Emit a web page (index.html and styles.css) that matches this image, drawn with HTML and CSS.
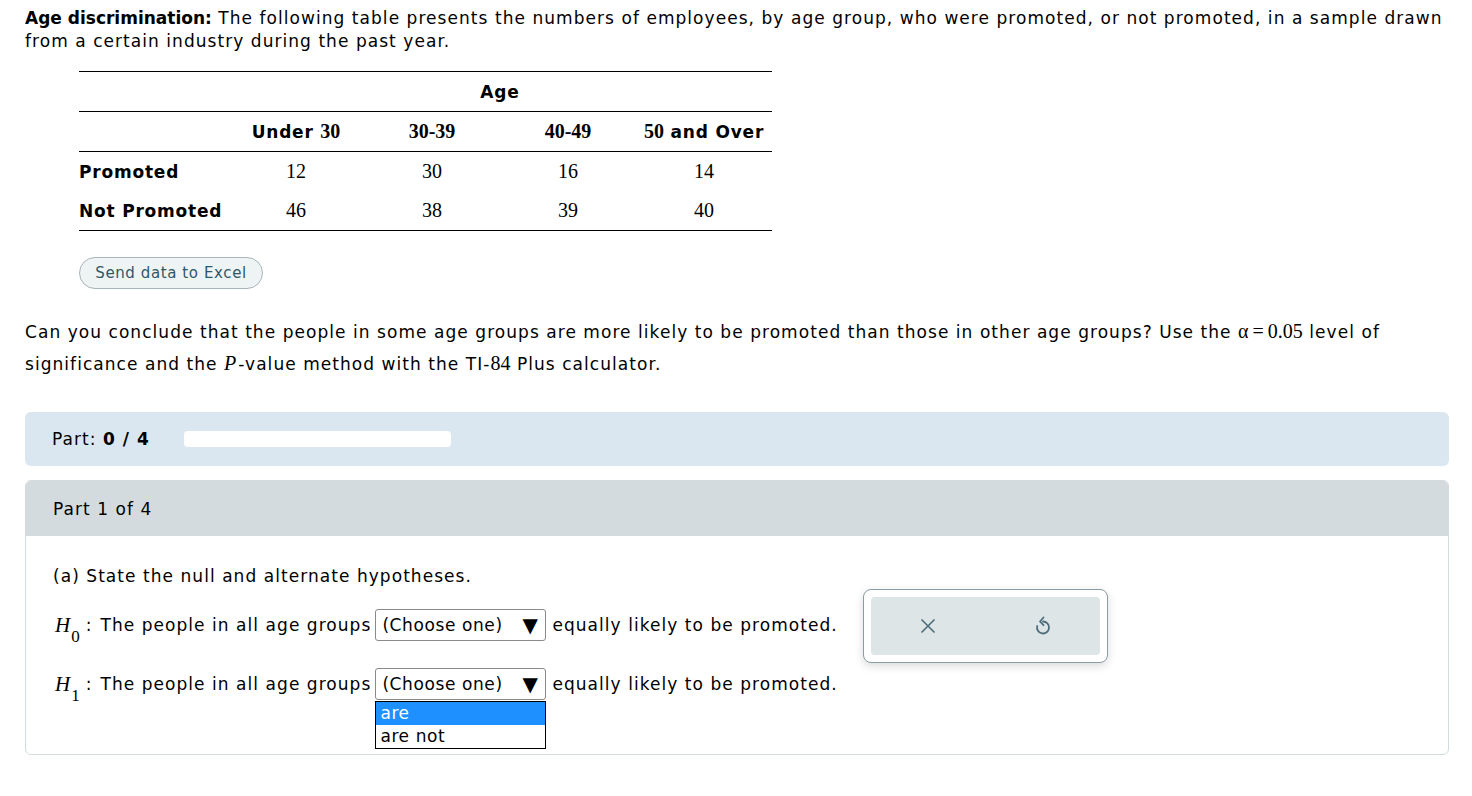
FILE: index.html
```html
<!DOCTYPE html>
<html lang="en">
<head>
    <meta charset="UTF-8">
    <meta name="viewport" content="width=device-width, initial-scale=1.0">
    <title>Age discrimination</title>
    <link rel="stylesheet" href="styles.css">
</head>
<body>
    <div class="page">
        <p class="intro"><b>Age discrimination:</b> The following table presents the numbers of employees, by age group, who were promoted, or not promoted, in a sample drawn from a certain industry during the past year.</p>

        <table class="data-table">
            <tr class="row-age">
                <td></td>
                <th colspan="4">Age</th>
            </tr>
            <tr class="row-head">
                <td></td>
                <th>Under <span class="num">30</span></th>
                <th><span class="num">30-39</span></th>
                <th><span class="num">40-49</span></th>
                <th><span class="num">50</span> and Over</th>
            </tr>
            <tr>
                <th class="label">Promoted</th>
                <td class="num">12</td>
                <td class="num">30</td>
                <td class="num">16</td>
                <td class="num">14</td>
            </tr>
            <tr class="row-last">
                <th class="label">Not Promoted</th>
                <td class="num">46</td>
                <td class="num">38</td>
                <td class="num">39</td>
                <td class="num">40</td>
            </tr>
        </table>

        <button class="excel-btn">Send data to Excel</button>

        <p class="question">Can you conclude that the people in some age groups are more likely to be promoted than those in other age groups? Use the <span class="math">α<span class="eq">=</span>0.05</span> level of significance and the <span class="math var">P</span>-value method with the TI-<span class="math">84</span> Plus calculator.</p>

        <div class="progress">
            <span>Part: <b>0 / 4</b></span>
            <div class="progress-bar"></div>
        </div>

        <div class="part-card">
            <div class="part-head">Part 1 of 4</div>
            <div class="part-body">
                <div class="hypotheses">
                    <p class="prompt">(a) State the null and alternate hypotheses.</p>
                    <div class="hyp-row">
                        <span class="math var">H</span><sub class="math">0</sub>
                        <span class="colon">:</span>
                        <span>The people in all age groups</span>
                        <span class="select">(Choose one) <span class="arrow">▼</span></span>
                        <span>equally likely to be promoted.</span>
                    </div>
                    <div class="hyp-row">
                        <span class="math var">H</span><sub class="math">1</sub>
                        <span class="colon">:</span>
                        <span>The people in all age groups</span>
                        <span class="select-wrap">
                            <span class="select">(Choose one) <span class="arrow">▼</span></span>
                            <ul class="options">
                                <li class="active">are</li>
                                <li>are not</li>
                            </ul>
                        </span>
                        <span>equally likely to be promoted.</span>
                    </div>
                </div>
                <div class="actions">
                    <div class="actions-inner">
                        <button class="icon-btn" title="Clear">
                            <svg width="18" height="18" viewBox="0 0 18 18">
                                <path d="M2.5 2.5 L15.5 15.5 M15.5 2.5 L2.5 15.5" stroke="#4d6c79" stroke-width="1.6" fill="none"/>
                            </svg>
                        </button>
                        <button class="icon-btn" title="Undo">
                            <svg width="18" height="20" viewBox="0 0 18 20">
                                <path d="M9 5.5 A6 6 0 1 1 3.2 10" stroke="#4d6c79" stroke-width="1.8" fill="none" stroke-linecap="round"/>
                                <path d="M9.5 1.5 L6 5.5 L9.5 9.2" stroke="#4d6c79" stroke-width="1.8" fill="none" stroke-linecap="round" stroke-linejoin="round"/>
                            </svg>
                        </button>
                    </div>
                </div>
            </div>
        </div>
    </div>
</body>
</html>
```

FILE: styles.css
```css
body {
    margin: 0;
    font-family: "DejaVu Sans", Verdana, sans-serif;
    font-size: 17px;
    letter-spacing: 1.05px;
    color: #000;
    background-color: #fff;
}
.page {
    padding: 7px 23px 0 25px;
}
.intro {
    margin: 0;
    line-height: 23px;
}
.intro b {
    letter-spacing: 0;
}
.math {
    font-family: "Liberation Serif", "Times New Roman", serif;
    font-size: 20px;
    letter-spacing: 0;
    line-height: 1;
}
.var {
    font-style: italic;
    padding-right: 2px;
}
.eq {
    margin: 0 4px;
}
.data-table {
    border-collapse: collapse;
    margin: 18px 0 0 54px;
    width: 693px;
}
.data-table td,
.data-table th {
    height: 39px;
    padding: 0;
    text-align: center;
    font-weight: normal;
}
.data-table tr:first-child {
    border-top: 1px solid #000;
}
.data-table .row-age,
.data-table .row-head,
.data-table .row-last {
    border-bottom: 1px solid #000;
}
.data-table th {
    font-weight: bold;
    width: 136px;
    letter-spacing: 0.8px;
}
.data-table .row-head th .num {
    font-family: "Liberation Serif", "Times New Roman", serif;
    font-size: 20px;
    font-weight: bold;
    letter-spacing: 0;
}
.data-table td.num {
    font-family: "Liberation Serif", "Times New Roman", serif;
    font-size: 20px;
    letter-spacing: 0;
}
.data-table .label {
    text-align: left;
    width: 149px;
}
.excel-btn {
    display: block;
    margin: 26px 0 0 54px;
    width: 184px;
    height: 32px;
    border: 1px solid #a7b6bb;
    border-radius: 16px;
    background-color: #eef3f4;
    color: #2e5868;
    font-family: "DejaVu Sans", Verdana, sans-serif;
    font-size: 15px;
    letter-spacing: 0.6px;
}
.question {
    margin: 27px 0 0;
    line-height: 32px;
}
.progress {
    margin-top: 32px;
    height: 54px;
    background-color: #dbe7f0;
    border-radius: 6px;
    display: flex;
    align-items: center;
    padding-left: 27px;
    gap: 34px;
}
.progress-bar {
    width: 267px;
    height: 16px;
    background-color: #fff;
    border-radius: 4px;
}
.part-card {
    margin-top: 14px;
    border: 1px solid #d3dbde;
    border-radius: 6px;
}
.part-head {
    height: 55px;
    background-color: #d3dbde;
    border-radius: 5px 5px 0 0;
    display: flex;
    align-items: center;
    padding-left: 27px;
}
.part-body {
    display: flex;
    align-items: flex-start;
    padding: 28px 0 53px 27px;
}
.hypotheses {
    width: 810px;
}
.prompt {
    margin: 0;
    line-height: 24px;
}
.hyp-row {
    display: flex;
    align-items: center;
    height: 34px;
    margin-top: 25px;
    white-space: nowrap;
}
.prompt + .hyp-row {
    margin-top: 20px;
}
.hyp-row .var {
    margin-left: 2px;
    padding-right: 0;
    font-size: 21px;
}
.hyp-row sub {
    font-size: 17px;
    align-self: flex-end;
    margin-bottom: -3px;
    margin-left: 1px;
}
.colon {
    margin: 0 8px 0 6px;
}
.select {
    display: inline-flex;
    align-items: center;
    justify-content: space-between;
    box-sizing: border-box;
    width: 171px;
    height: 32px;
    margin: 0 6px 0 4px;
    padding: 0 7px 0 6px;
    border: 1px solid #8a8a8a;
    border-radius: 3px;
    font-size: 17px;
    letter-spacing: 0.6px;
}
.arrow {
    font-size: 20px;
}
.select-wrap {
    position: relative;
    display: inline-flex;
}
.options {
    position: absolute;
    top: 33px;
    left: 4px;
    width: 171px;
    box-sizing: border-box;
    margin: 0;
    padding: 0;
    list-style: none;
    border: 1px solid #000;
    background-color: #fff;
    font-size: 17px;
    letter-spacing: 0.6px;
}
.options li {
    height: 23px;
    line-height: 23px;
    padding-left: 4px;
}
.options .active {
    background-color: #1e90ff;
    color: #fff;
}
.actions {
    margin-top: 25px;
    width: 245px;
    height: 74px;
    box-sizing: border-box;
    padding: 7px;
    border: 1px solid #8a9ca3;
    border-radius: 8px;
    background-color: #fff;
    box-shadow: 0 3px 10px rgba(0,0,0,0.15);
}
.actions-inner {
    display: flex;
    height: 100%;
    background-color: #dee5e7;
    border-radius: 4px;
}
.icon-btn {
    flex: 1;
    border: none;
    background: none;
    display: flex;
    align-items: center;
    justify-content: center;
    padding: 0;
}
```
